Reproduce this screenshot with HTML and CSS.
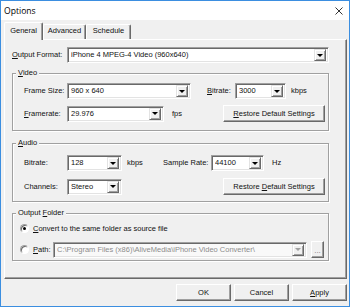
FILE: index.html
```html
<!DOCTYPE html>
<html>
<head>
    <title>Options</title>
    <link rel="stylesheet" href="styles.css">
</head>
<body>
    <div class="window">
        <div class="titlebar">
            <span class="title">Options</span>
            <svg class="close" width="8" height="8" viewBox="0 0 8 8">
                <path d="M0.5 0.5 L7.5 7.5 M7.5 0.5 L0.5 7.5" stroke="#333" stroke-width="1" fill="none"/>
            </svg>
        </div>
        <div class="content">
            <div class="tabs">
                <div class="tab tab-general active">General</div>
                <div class="tab tab-advanced">Advanced</div>
                <div class="tab tab-schedule">Schedule</div>
            </div>
            <div class="panel">
                <div class="row format-row">
                    <span class="label w-format"><u>O</u>utput Format:</span>
                    <div class="combo w-262"><span class="value">iPhone 4 MPEG-4 Video (960x640)</span><span class="drop"></span></div>
                </div>

                <div class="group group-video">
                    <div class="group-title"><u>V</u>ideo</div>
                    <div class="row row-a">
                        <span class="label w-43">Frame Size:</span>
                        <div class="combo w-124"><span class="value">960 x 640</span><span class="drop"></span></div>
                        <span class="label w-28 ml-16"><u>B</u>itrate:</span>
                        <div class="combo w-51"><span class="value">3000</span><span class="drop"></span></div>
                        <span class="unit ml-5">kbps</span>
                    </div>
                    <div class="row row-b">
                        <span class="label w-43"><u>F</u>ramerate:</span>
                        <div class="combo w-97"><span class="value">29.976</span><span class="drop"></span></div>
                        <span class="unit ml-8">fps</span>
                        <div class="btn btn-restore"><span><u>R</u>estore Default Settings</span></div>
                    </div>
                </div>

                <div class="group group-audio">
                    <div class="group-title"><u>A</u>udio</div>
                    <div class="row row-a">
                        <span class="label w-43">Bitrate:</span>
                        <div class="combo w-55"><span class="value">128</span><span class="drop"></span></div>
                        <span class="unit ml-5 w-36">kbps</span>
                        <span class="label w-48">Sample Rate:</span>
                        <div class="combo w-53"><span class="value">44100</span><span class="drop"></span></div>
                        <span class="unit ml-8">Hz</span>
                    </div>
                    <div class="row row-b">
                        <span class="label w-43">Channels:</span>
                        <div class="combo w-55"><span class="value">Stereo</span><span class="drop"></span></div>
                        <div class="btn btn-restore"><span>Restore <u>D</u>efault Settings</span></div>
                    </div>
                </div>

                <div class="group group-folder">
                    <div class="group-title">Output <u>F</u>older</div>
                    <div class="row folder-row row-a">
                        <span class="radio on"></span>
                        <span class="label"><u>C</u>onvert to the same folder as source file</span>
                    </div>
                    <div class="row folder-row row-b">
                        <span class="radio"></span>
                        <span class="label w-20"><u>P</u>ath:</span>
                        <div class="combo w-254 disabled"><span class="value">C:\Program Files (x86)\AliveMedia\iPhone Video Converter\</span><span class="drop"></span></div>
                        <div class="btn btn-browse disabled"><span class="dots">...</span></div>
                    </div>
                </div>
            </div>

            <div class="actions">
                <div class="btn btn-dialog btn-default">OK</div>
                <div class="btn btn-dialog">Cancel</div>
                <div class="btn btn-dialog"><span><u>A</u>pply</span></div>
            </div>
        </div>
    </div>
</body>
</html>
```

FILE: styles.css
```css
* { box-sizing: border-box; }

body {
    margin: 0;
    font-family: "Liberation Sans", Arial, sans-serif;
    font-size: 7.5px;
    line-height: 10px;
    color: #111;
}

.window {
    width: 350px;
    height: 307px;
    border: 1px solid #3b8ee0;
    background: #f0f0f0;
    display: flex;
    flex-direction: column;
}

.titlebar {
    height: 19px;
    background: #fff;
    display: flex;
    align-items: center;
    justify-content: space-between;
    padding: 0 6px 0 3px;
}
.title {
    font-family: "Open Sans", "Noto Sans", sans-serif;
    font-size: 8.6px;
    color: #000;
}

.content {
    flex: 1;
    padding: 2px 2px 0 3px;
}

/* tab strip */
.tabs {
    display: flex;
    align-items: flex-end;
    height: 17px;
    position: relative;
    z-index: 1;
}
.tab {
    height: 15px;
    line-height: 12px;
    text-align: center;
    border: 1px solid #fff;
    border-right-color: #696969;
    border-bottom: none;
    box-shadow: inset -1px 0 0 #a0a0a0;
    border-radius: 2px 2px 0 0;
    background: #f0f0f0;
}
.tab.active {
    height: 18px;
    margin-bottom: -1px;
    line-height: 15px;
}
.tab-general { width: 39px; }
.tab-advanced { width: 43px; }
.tab-schedule { width: 45px; }

.panel {
    height: 240px;
    border: 1px solid;
    border-color: #fff #696969 #696969 #fff;
    box-shadow: inset -1px -1px 0 #a0a0a0;
    padding: 7px 0 0 7px;
}

.row {
    display: flex;
    align-items: center;
}
.format-row { height: 16px; }
.label { white-space: nowrap; }
.unit { white-space: nowrap; }

.w-format { width: 55px; }
.w-20 { width: 20px; }
.w-28 { width: 28px; }
.w-36 { width: 36px; }
.w-43 { width: 43px; }
.w-48 { width: 48px; }
.w-51 { width: 51px; }
.w-53 { width: 53px; }
.w-55 { width: 55px; }
.w-97 { width: 97px; }
.w-124 { width: 124px; }
.w-254 { width: 254px; }
.w-262 { width: 262px; }
.ml-5 { margin-left: 5px; }
.ml-8 { margin-left: 8px; }
.ml-16 { margin-left: 16px; }

/* group boxes */
.group {
    width: 317px;
    border: 1px solid #a0a0a0;
    box-shadow: inset 1px 1px 0 #fff, 1px 1px 0 #fff;
    padding: 0 3px 0 11px;
}
.group-title {
    display: table;
    margin: -6px 0 0 -8px;
    padding: 0 2px;
    background: #f0f0f0;
    line-height: 10px;
}
.group-video { margin-top: 10px; padding-bottom: 8px; }
.group-video .row-a { margin-top: 5px; height: 16px; }
.group-video .row-b { margin-top: 6px; height: 17px; }

.group-audio { margin-top: 12px; padding-bottom: 6px; }
.group-audio .row-a { margin-top: 7px; height: 16px; }
.group-audio .row-b { margin-top: 7px; height: 17px; }

.group-folder { margin-top: 11px; padding-bottom: 2px; }
.folder-row { margin-left: -4px; }
.group-folder .row-a { margin-top: 4px; height: 13px; }
.group-folder .row-b { margin-top: 6px; height: 17px; }

/* combo boxes */
.combo {
    height: 16px;
    background: #fff;
    border: 1px solid;
    border-color: #a0a0a0 #fff #fff #a0a0a0;
    box-shadow: inset 1px 1px 0 #696969, inset -1px -1px 0 #e3e3e3;
    display: flex;
    align-items: center;
    padding: 2px 2px 2px 3px;
    flex-shrink: 0;
}
.combo .value {
    flex: 1;
    white-space: nowrap;
    overflow: hidden;
}
.drop {
    width: 12px;
    height: 12px;
    background: #f0f0f0;
    border: 1px solid;
    border-color: #e3e3e3 #696969 #696969 #e3e3e3;
    box-shadow: inset 1px 1px 0 #fff, inset -1px -1px 0 #a0a0a0;
    display: flex;
    align-items: center;
    justify-content: center;
    flex-shrink: 0;
}
.drop::after {
    content: "";
    border-left: 3px solid transparent;
    border-right: 3px solid transparent;
    border-top: 3px solid #000;
}
.combo.disabled { background: #f9f9f9; color: #8d8d8d; }
.combo.disabled .drop::after { border-top-color: #a0a0a0; }

/* buttons */
.btn {
    height: 17px;
    background: #f0f0f0;
    border: 1px solid;
    border-color: #fff #696969 #696969 #fff;
    box-shadow: inset -1px -1px 0 #a0a0a0;
    display: flex;
    align-items: center;
    justify-content: center;
    white-space: nowrap;
    flex-shrink: 0;
}
.btn-restore { width: 102px; margin-left: auto; }
.btn-browse { width: 13px; margin-left: 4px; padding: 0; }
.btn-browse .dots { font-size: 8px; line-height: 8px; color: #7a7a7a; margin-top: 3px; }
.btn.disabled { color: #8d8d8d; }

.actions {
    display: flex;
    justify-content: flex-end;
    gap: 3px;
    margin-top: 5px;
}
.btn-dialog { width: 55px; }

/* radio buttons */
.radio {
    width: 9px;
    height: 9px;
    border-radius: 50%;
    border: 1px solid;
    border-color: #a0a0a0 #fff #fff #a0a0a0;
    box-shadow: inset 1px 1px 0 #696969;
    background: #fff;
    margin-right: 4px;
    display: flex;
    align-items: center;
    justify-content: center;
    flex-shrink: 0;
}
.radio.on::after {
    content: "";
    width: 3px;
    height: 3px;
    border-radius: 50%;
    background: #000;
}
```
